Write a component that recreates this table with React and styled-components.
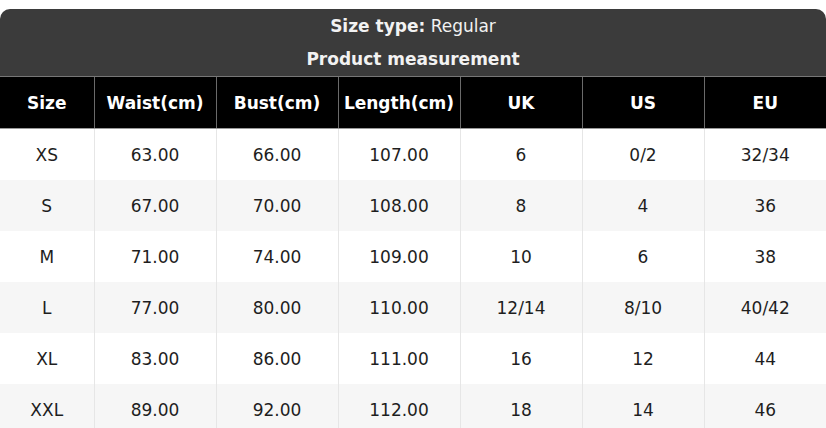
import styled, { createGlobalStyle } from "styled-components"

const GlobalStyle = createGlobalStyle`
  body {
    margin: 0;
    background: #ffffff;
    font-family: "DejaVu Sans", "Liberation Sans", sans-serif;
  }
`

const Page = styled.div`
  padding-top: 9px;
  width: 826px;
  height: 428px;
  overflow: hidden;
`

const Card = styled.div`
  border-radius: 10px 10px 0 0;
  overflow: hidden;
`

const Banner = styled.div`
  background: #3b3b3b;
  color: #f2f2f2;
  display: flex;
  flex-direction: column;
  align-items: center;
  border-bottom: 1px solid #777;
`

const BannerLine = styled.div`
  height: ${(p) => p.$h}px;
  display: flex;
  align-items: center;
  font-size: 17px;
  font-weight: ${(p) => (p.$bold ? 700 : 400)};
  b {
    font-weight: 700;
  }
`

const Table = styled.table`
  width: 826px;
  border-collapse: collapse;
  table-layout: fixed;
`

const HeadCell = styled.th`
  background: #000;
  color: #fff;
  height: 51px;
  padding: 0;
  font-size: 17px;
  font-weight: 700;
  text-align: center;
  border-left: 1px solid #6a6a6a;
  border-bottom: 1px solid #9a9a9a;
  &:first-child {
    border-left: none;
  }
`

const Row = styled.tr`
  background: ${(p) => (p.$shade ? "#f6f6f6" : "#ffffff")};
`

const Cell = styled.td`
  height: 51px;
  padding: 0;
  font-size: 17px;
  color: #1e1e1e;
  text-align: center;
  border-left: 1px solid #e6e6e6;
  &:first-child {
    border-left: none;
  }
`

const widths = [94, 122, 122, 122, 122, 122, 122]
const heads = ["Size", "Waist(cm)", "Bust(cm)", "Length(cm)", "UK", "US", "EU"]
const rows = [
  ["XS", "63.00", "66.00", "107.00", "6", "0/2", "32/34"],
  ["S", "67.00", "70.00", "108.00", "8", "4", "36"],
  ["M", "71.00", "74.00", "109.00", "10", "6", "38"],
  ["L", "77.00", "80.00", "110.00", "12/14", "8/10", "40/42"],
  ["XL", "83.00", "86.00", "111.00", "16", "12", "44"],
  ["XXL", "89.00", "92.00", "112.00", "18", "14", "46"],
]

export default function App() {
  return (
    <>
      <GlobalStyle />
      <Page>
        <Card>
          <Banner>
            <BannerLine $h={33}>
              <span>
                <b>Size type:</b> Regular
              </span>
            </BannerLine>
            <BannerLine $h={34} $bold>
              Product measurement
            </BannerLine>
          </Banner>
          <Table>
            <colgroup>
              {widths.map((w, i) => (
                <col key={i} style={{ width: w }} />
              ))}
            </colgroup>
            <thead>
              <tr>
                {heads.map((h) => (
                  <HeadCell key={h}>{h}</HeadCell>
                ))}
              </tr>
            </thead>
            <tbody>
              {rows.map((r, i) => (
                <Row key={r[0]} $shade={i % 2 === 1}>
                  {r.map((c, j) => (
                    <Cell key={j}>{c}</Cell>
                  ))}
                </Row>
              ))}
            </tbody>
          </Table>
        </Card>
      </Page>
    </>
  )
}
